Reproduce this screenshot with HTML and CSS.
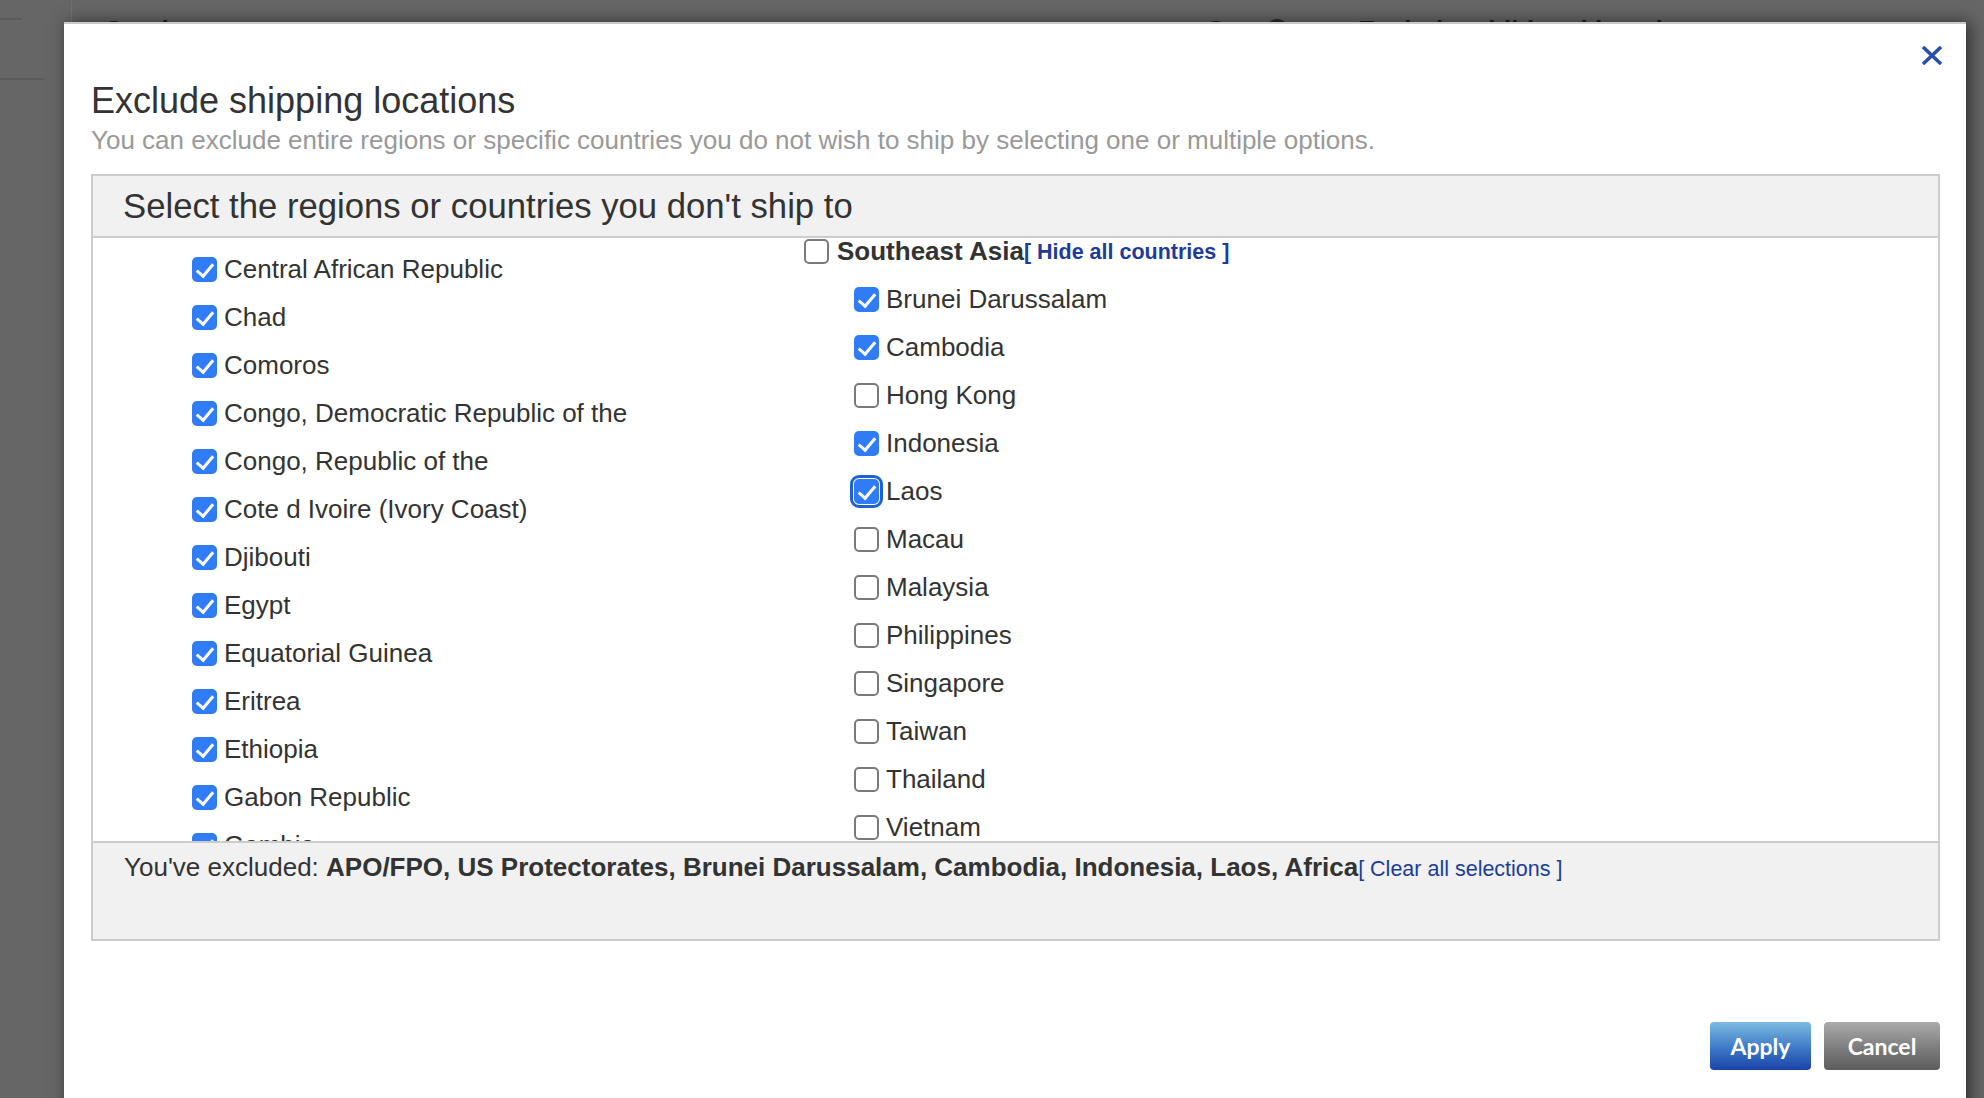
FILE: index.html
```html
<!DOCTYPE html>
<html>
<head>
	<title>Exclude shipping locations</title>
	<link rel="stylesheet" href="styles.css">
</head>
<body>
<div class="page">
	<div class="side">
		<div class="side-tab"></div>
		<div class="side-rule"></div>
	</div>
	<div class="page-main">
		<div class="page-head">
			<span class="col-service">Services</span>
			<span class="col-cost">Cost</span>
			<span class="col-info"></span>
			<span class="col-extra">Exclude additional locations</span>
		</div>
	</div>
</div>

<div class="modal">
	<a class="close" href="#" title="Close">
		<svg width="22" height="19" viewBox="0 0 22 19"><path d="M2 1 L20 18 M20 1 L2 18" stroke="#2b50a8" stroke-width="3.6" fill="none"/></svg>
	</a>
	<h1>Exclude shipping locations</h1>
	<p class="sub">You can exclude entire regions or specific countries you do not wish to ship by selecting one or multiple options.</p>

	<div class="panel">
		<div class="panel-head">Select the regions or countries you don't ship to</div>
		<div class="panel-list">
			<div class="col-left">
				<label class="row"><span class="box on"></span>Central African Republic</label>
				<label class="row"><span class="box on"></span>Chad</label>
				<label class="row"><span class="box on"></span>Comoros</label>
				<label class="row"><span class="box on"></span>Congo, Democratic Republic of the</label>
				<label class="row"><span class="box on"></span>Congo, Republic of the</label>
				<label class="row"><span class="box on"></span>Cote d Ivoire (Ivory Coast)</label>
				<label class="row"><span class="box on"></span>Djibouti</label>
				<label class="row"><span class="box on"></span>Egypt</label>
				<label class="row"><span class="box on"></span>Equatorial Guinea</label>
				<label class="row"><span class="box on"></span>Eritrea</label>
				<label class="row"><span class="box on"></span>Ethiopia</label>
				<label class="row"><span class="box on"></span>Gabon Republic</label>
				<label class="row"><span class="box on"></span>Gambia</label>
			</div>
			<div class="col-right">
				<div class="row region"><span class="box"></span><b>Southeast Asia</b><a class="toggle" href="#">[ Hide all countries ]</a></div>
				<label class="row sub-row"><span class="box on"></span>Brunei Darussalam</label>
				<label class="row sub-row"><span class="box on"></span>Cambodia</label>
				<label class="row sub-row"><span class="box"></span>Hong Kong</label>
				<label class="row sub-row"><span class="box on"></span>Indonesia</label>
				<label class="row sub-row"><span class="box on focus"></span>Laos</label>
				<label class="row sub-row"><span class="box"></span>Macau</label>
				<label class="row sub-row"><span class="box"></span>Malaysia</label>
				<label class="row sub-row"><span class="box"></span>Philippines</label>
				<label class="row sub-row"><span class="box"></span>Singapore</label>
				<label class="row sub-row"><span class="box"></span>Taiwan</label>
				<label class="row sub-row"><span class="box"></span>Thailand</label>
				<label class="row sub-row"><span class="box"></span>Vietnam</label>
			</div>
		</div>
		<div class="panel-foot">
			You've excluded: <b>APO/FPO, US Protectorates, Brunei Darussalam, Cambodia, Indonesia, Laos, Africa</b><a class="clear" href="#">[ Clear all selections ]</a>
		</div>
	</div>

	<div class="actions">
		<button class="btn apply">Apply</button>
		<button class="btn cancel">Cancel</button>
	</div>
</div>
</body>
</html>
```

FILE: styles.css
```css
* {
	box-sizing: border-box;
}

html, body {
	margin: 0;
	height: 100%;
}

body {
	background: #666;
	font-family: "Liberation Sans", Arial, sans-serif;
	color: #333;
	overflow: hidden;
	position: relative;
}

/* page behind the overlay */
.page {
	display: flex;
	height: 100%;
}

.side {
	width: 72px;
	border-right: 1px solid #727272;
}

.side-tab {
	width: 22px;
	height: 20px;
	border-bottom: 2px solid #5a5a5a;
}

.side-rule {
	width: 44px;
	margin-top: 58px;
	border-bottom: 2px solid #5a5a5a;
}

.page-main {
	flex: 1;
}

.page-head {
	display: flex;
	align-items: center;
	padding: 15px 0 0 33px;
	font-size: 26px;
	line-height: 30px;
	font-weight: bold;
	color: #1f1f1f;
}

.col-service {
	width: 1101px;
}

.col-cost {
	width: 60px;
}

.col-info {
	width: 22px;
	height: 22px;
	border-radius: 50%;
	background: #2a2a2a;
	margin-right: 70px;
}

/* modal */
.modal {
	position: absolute;
	left: 64px;
	top: 22px;
	width: 1902px;
	height: 1100px;
	background: #fff;
	border-top: 2px solid #c9c9c9;
	padding: 57px 26px 0 27px;
	box-shadow: 4px 0 16px rgba(0, 0, 0, 0.55);
}

.close {
	position: absolute;
	top: 22px;
	right: 23px;
	display: block;
	line-height: 0;
}

h1 {
	margin: 0;
	font-size: 36px;
	line-height: 40px;
	font-weight: normal;
	color: #333;
}

.sub {
	margin: 4px 0 0;
	font-size: 26px;
	line-height: 30px;
	color: #999;
}

.panel {
	margin-top: 19px;
	border: 2px solid #ccc;
}

.panel-head {
	height: 62px;
	padding-left: 30px;
	background: #f1f1f1;
	border-bottom: 2px solid #ccc;
	font-size: 34.7px;
	line-height: 60px;
}

.panel-list {
	height: 603px;
	overflow: hidden;
	display: grid;
	grid-template-columns: 711px 1fr;
	align-items: start;
}

.col-left {
	padding: 7px 0 0 99px;
}

.col-right {
	margin-top: -11px;
}

.row {
	display: flex;
	align-items: center;
	gap: 7px;
	height: 48px;
	font-size: 26px;
	white-space: nowrap;
}

.sub-row {
	padding-left: 50px;
}

.region b {
	margin-left: 1px;
}

.toggle {
	font-size: 21.5px;
	font-weight: bold;
	color: #1d3c99;
	text-decoration: none;
	margin-left: -7px;
	padding-top: 2px;
}

/* checkboxes */
.box {
	flex: none;
	position: relative;
	width: 25px;
	height: 25px;
	border: 2px solid #7a7a7a;
	border-radius: 5px;
	background: #fff;
}

.box.on {
	border: none;
	background: #2f7cf6;
}

.box.on::after {
	content: "";
	position: absolute;
	left: 8px;
	top: 3px;
	width: 7px;
	height: 14px;
	border-right: 3.5px solid #fff;
	border-bottom: 3.5px solid #fff;
	transform: rotate(40deg);
}

.box.focus {
	outline: 3.5px solid #1f63d2;
	outline-offset: 1px;
}

.panel-foot {
	height: 98px;
	padding: 8px 31px 0;
	background: #f1f1f1;
	border-top: 2px solid #ccc;
	font-size: 26px;
	line-height: 32px;
	white-space: nowrap;
}

.clear {
	font-size: 21.5px;
	color: #1d3c99;
	text-decoration: none;
}

/* buttons */
.actions {
	display: flex;
	justify-content: flex-end;
	gap: 13px;
	margin-top: 81px;
}

.btn {
	height: 48px;
	border: none;
	border-radius: 4px;
	font-family: Lato, "Liberation Sans", sans-serif;
	font-weight: bold;
	font-size: 23px;
	color: #fff;
	padding: 0;
}

.apply {
	width: 101px;
	background: linear-gradient(#7dbbe2, #3d78c6 55%, #1a43a6);
}

.cancel {
	width: 116px;
	background: linear-gradient(#ababab, #7c7c7c 55%, #5c5c5c);
}
```
